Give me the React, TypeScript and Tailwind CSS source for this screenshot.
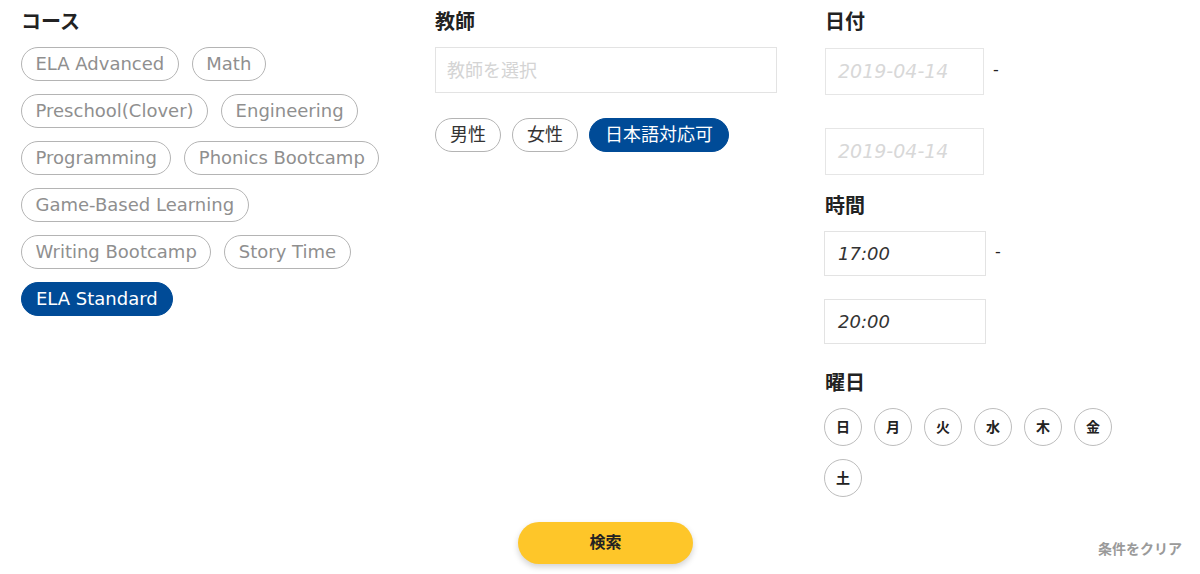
import React, { useState } from 'react';

const courses = [
  'ELA Advanced',
  'Math',
  'Preschool(Clover)',
  'Engineering',
  'Programming',
  'Phonics Bootcamp',
  'Game-Based Learning',
  'Writing Bootcamp',
  'Story Time',
  'ELA Standard',
];

const days = ['日', '月', '火', '水', '木', '金', '土'];

const font = { fontFamily: '"DejaVu Sans", "Noto Sans CJK JP", sans-serif' };

const Chip = ({ label, active, onClick }: { label: string; active?: boolean; onClick?: () => void }) => (
  <button
    type="button"
    onClick={onClick}
    className={
      active
        ? 'h-[34px] px-[14px] rounded-full bg-[#004b97] border border-[#004b97] text-white text-[18px] leading-none whitespace-nowrap'
        : 'h-[34px] px-[13.5px] rounded-full bg-white border border-[#b4b4b4] text-[#8f8f8f] text-[18px] leading-none whitespace-nowrap'
    }
  >
    {label}
  </button>
);

const Heading = ({ children }: { children: React.ReactNode }) => (
  <h2 className="text-[20px] leading-[24px] font-bold text-[#222]">{children}</h2>
);

const App = () => {
  const [course, setCourse] = useState('ELA Standard');
  const [tags, setTags] = useState<string[]>(['日本語対応可']);

  const toggleTag = (t: string) =>
    setTags((prev) => (prev.includes(t) ? prev.filter((x) => x !== t) : [...prev, t]));

  return (
    <div className="w-[1200px] h-[574px] bg-white overflow-hidden" style={font}>
      <div className="flex pt-[10px] pl-[21px]">
        {/* コース */}
        <div className="w-[414px]">
          <Heading>コース</Heading>
          <div className="mt-[13px] flex flex-wrap gap-x-[13px] gap-y-[13px] w-[370px]">
            {courses.map((c) => (
              <Chip key={c} label={c} active={course === c} onClick={() => setCourse(c)} />
            ))}
          </div>
        </div>

        {/* 教師 */}
        <div className="w-[390px]">
          <Heading>教師</Heading>
          <div className="mt-[13px] w-[342px] h-[46px] border border-[#e3e3e3] flex items-center px-[11px] text-[18px] text-[#d4d4d4]">
            教師を選択
          </div>
          <div className="mt-[25px] flex gap-x-[11px]">
            {['男性', '女性', '日本語対応可'].map((t) => (
              <button
                key={t}
                type="button"
                onClick={() => toggleTag(t)}
                className={
                  tags.includes(t)
                    ? 'h-[34px] px-[15px] rounded-full bg-[#004b97] border border-[#004b97] text-white text-[18px] leading-none'
                    : 'h-[34px] px-[14px] rounded-full bg-white border border-[#b4b4b4] text-[#333] text-[18px] leading-none'
                }
              >
                {t}
              </button>
            ))}
          </div>
        </div>

        {/* 日付・時間・曜日 */}
        <div className="flex-1">
          <Heading>日付</Heading>
          <div className="mt-[14px] flex items-start">
            <div className="w-[159px] h-[47px] border border-[#e6e6e6] flex items-center px-[12px] text-[19px] italic text-[#d8d8d8]">
              2019-04-14
            </div>
            <span className="ml-[9px] mt-[10px] text-[16px] text-[#222]">-</span>
          </div>
          <div className="mt-[33px] w-[159px] h-[47px] border border-[#e6e6e6] flex items-center px-[12px] text-[19px] italic text-[#d8d8d8]">
            2019-04-14
          </div>

          <div className="mt-[19px]">
            <Heading>時間</Heading>
          </div>
          <div className="mt-[13px] -ml-[1px] flex items-start">
            <div className="w-[162px] h-[45px] border border-[#e3e3e3] flex items-center px-[13px] text-[18px] italic text-[#333]">
              17:00
            </div>
            <span className="ml-[9px] mt-[9px] text-[16px] text-[#222]">-</span>
          </div>
          <div className="mt-[23px] -ml-[1px] w-[162px] h-[45px] border border-[#e3e3e3] flex items-center px-[13px] text-[18px] italic text-[#333]">
            20:00
          </div>

          <div className="mt-[27px]">
            <Heading>曜日</Heading>
          </div>
          <div className="mt-[13px] -ml-[1px] flex flex-wrap gap-x-[12px] gap-y-[13px] w-[300px]">
            {days.map((d) => (
              <button
                key={d}
                type="button"
                className="w-[38px] h-[38px] rounded-full border border-[#bdbdbd] bg-white flex items-center justify-center text-[14px] font-bold text-[#222]"
              >
                {d}
              </button>
            ))}
          </div>
        </div>
      </div>

      <div className="mt-[25px] grid grid-cols-[1fr_auto_1fr] items-center">
        <div />
        <button
          type="button"
          className="ml-[11px] w-[175px] h-[42px] rounded-full bg-[#fec629] shadow-[0_3px_6px_rgba(0,0,0,0.18)] text-[16px] font-bold text-[#222]"
        >
          検索
        </button>
        <div className="flex justify-end pr-[18px] pt-[12px]">
          <button type="button" className="text-[14px] font-bold text-[#9a9a9a]">
            条件をクリア
          </button>
        </div>
      </div>
    </div>
  );
};

export default App;
